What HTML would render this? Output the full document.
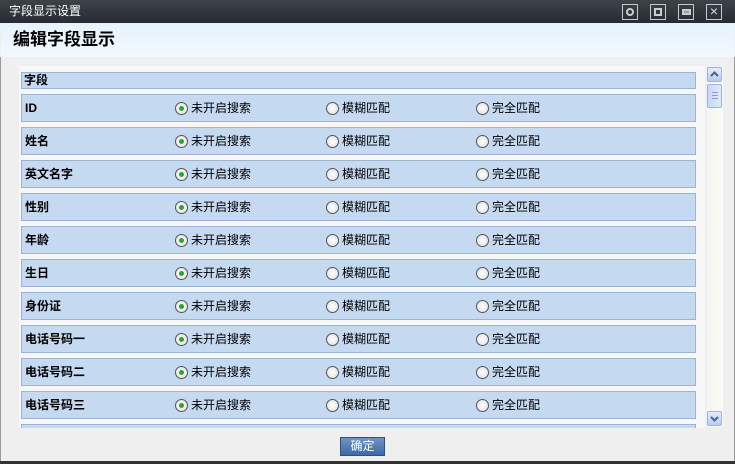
<!DOCTYPE html>
<html><head><meta charset="utf-8"><style>
*{margin:0;padding:0;box-sizing:border-box}
body{width:735px;height:464px;overflow:hidden;background:#efefef;font-family:"Liberation Sans","Noto Sans CJK SC",sans-serif;font-size:12px;color:#000;position:relative}
.tb{position:absolute;left:0;top:0;width:735px;height:23px;background:linear-gradient(#3c4349,#262c31);color:#fff;font-size:12px;line-height:23px;padding-left:9px}
.ic{position:absolute;top:4px;width:16px;height:16px;border:1px solid #c8c8c8}
.hd{position:absolute;left:1px;top:23px;width:733px;height:34px;background:linear-gradient(#e6f2fd,#f2f8fe);font-size:17px;font-weight:bold;line-height:34px;padding-left:12px}
.frame{position:absolute;left:0;top:57px;width:735px;height:404px;border-left:1px solid #9a9a9a;border-right:1px solid #9a9a9a}
.bot{position:absolute;left:0;top:461px;width:735px;height:3px;background:#333}
.area{position:absolute;left:19px;top:66px;width:686px;height:362px;background:#f7f7f7;overflow:hidden}
.row{position:absolute;left:2px;width:675px;background:#c5d9f0;border:1px solid #9cb3d4;font-weight:bold}
.r{position:absolute;top:6px;font-weight:normal;padding-left:16px;line-height:14px}
.r:before{content:"";position:absolute;left:0;top:1px;width:11px;height:11px;border-radius:50%;border:1px solid #555;background:radial-gradient(#fff,#ddd)}
.r.on:after{content:"";position:absolute;left:4px;top:5px;width:5px;height:5px;border-radius:50%;background:#2aa52a}
.sb{position:absolute;left:707px;top:67px;width:16px;height:360px;background:linear-gradient(90deg,#f4f4f4,#fbfbf5)}
.btn{position:absolute;left:340px;top:437px;width:45px;height:19px;background:linear-gradient(#6f93c4,#3f69a3);border:1px solid #2f4f80;color:#fff;text-align:center;line-height:17px;font-size:12px}
.arr{position:absolute;left:0;width:15px;height:15px;background:linear-gradient(#e4ecfc,#b8cbf3);border:1px solid #9eb4de;border-radius:2px}
</style></head><body>
<div class="tb">字段显示设置</div>
<div class="ic" style="left:622px"><div style="position:absolute;left:3px;top:3px;width:8px;height:8px;border:2px solid #ccc;border-radius:50%"></div></div>
<div class="ic" style="left:650px"><div style="position:absolute;left:3px;top:3px;width:8px;height:8px;border:2px solid #ccc"></div></div>
<div class="ic" style="left:678px"><div style="position:absolute;left:3px;top:4px;width:9px;height:6px;border:2px solid #ccc;background:#7aa"></div></div>
<div class="ic" style="left:706px;color:#ddd;font-size:14px;line-height:13px;text-align:center">×</div>
<div class="hd">编辑字段显示</div>
<div class="frame"></div>
<div class="area">
<div class="row" style="top:6px;height:17px;line-height:15px;padding-left:2px">字段</div>
<div class="row" style="top:28px;height:28px;line-height:26px;padding-left:3px">ID<span class="r on" style="left:153px">未开启搜索</span><span class="r" style="left:304px">模糊匹配</span><span class="r" style="left:454px">完全匹配</span></div>
<div class="row" style="top:61px;height:28px;line-height:26px;padding-left:3px">姓名<span class="r on" style="left:153px">未开启搜索</span><span class="r" style="left:304px">模糊匹配</span><span class="r" style="left:454px">完全匹配</span></div>
<div class="row" style="top:94px;height:28px;line-height:26px;padding-left:3px">英文名字<span class="r on" style="left:153px">未开启搜索</span><span class="r" style="left:304px">模糊匹配</span><span class="r" style="left:454px">完全匹配</span></div>
<div class="row" style="top:127px;height:28px;line-height:26px;padding-left:3px">性别<span class="r on" style="left:153px">未开启搜索</span><span class="r" style="left:304px">模糊匹配</span><span class="r" style="left:454px">完全匹配</span></div>
<div class="row" style="top:160px;height:28px;line-height:26px;padding-left:3px">年龄<span class="r on" style="left:153px">未开启搜索</span><span class="r" style="left:304px">模糊匹配</span><span class="r" style="left:454px">完全匹配</span></div>
<div class="row" style="top:193px;height:28px;line-height:26px;padding-left:3px">生日<span class="r on" style="left:153px">未开启搜索</span><span class="r" style="left:304px">模糊匹配</span><span class="r" style="left:454px">完全匹配</span></div>
<div class="row" style="top:226px;height:28px;line-height:26px;padding-left:3px">身份证<span class="r on" style="left:153px">未开启搜索</span><span class="r" style="left:304px">模糊匹配</span><span class="r" style="left:454px">完全匹配</span></div>
<div class="row" style="top:259px;height:28px;line-height:26px;padding-left:3px">电话号码一<span class="r on" style="left:153px">未开启搜索</span><span class="r" style="left:304px">模糊匹配</span><span class="r" style="left:454px">完全匹配</span></div>
<div class="row" style="top:292px;height:28px;line-height:26px;padding-left:3px">电话号码二<span class="r on" style="left:153px">未开启搜索</span><span class="r" style="left:304px">模糊匹配</span><span class="r" style="left:454px">完全匹配</span></div>
<div class="row" style="top:325px;height:28px;line-height:26px;padding-left:3px">电话号码三<span class="r on" style="left:153px">未开启搜索</span><span class="r" style="left:304px">模糊匹配</span><span class="r" style="left:454px">完全匹配</span></div>
<div class="row" style="top:358px;height:28px"></div>
</div>
<div class="sb">
<div class="arr" style="top:0"><svg width="13" height="13" style="position:absolute;left:0;top:0"><path d="M3 8 L6.5 4.5 L10 8" stroke="#4d6185" stroke-width="2" fill="none"/></svg></div>
<div style="position:absolute;left:0;top:17px;width:15px;height:24px;background:linear-gradient(90deg,#c8d7f8,#e0e8fc);border:1px solid #9eb4de;border-radius:2px"><div style="position:absolute;left:4px;top:7px;width:6px;height:7px;border-top:1px solid #8aa0cc;border-bottom:1px solid #8aa0cc"></div><div style="position:absolute;left:4px;top:10px;width:6px;height:1px;background:#8aa0cc"></div></div>
<div class="arr" style="top:344px"><svg width="13" height="13" style="position:absolute;left:0;top:0"><path d="M3 5 L6.5 8.5 L10 5" stroke="#4d6185" stroke-width="2" fill="none"/></svg></div>
</div>
<div class="btn">确定</div>
<div class="bot"></div>
</body></html>
